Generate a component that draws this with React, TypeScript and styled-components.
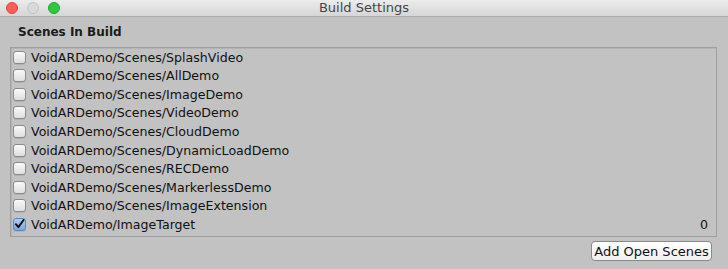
import React from 'react';
import styled, {createGlobalStyle} from 'styled-components';

const scenes: {path: string, checked: boolean, index?: number}[] = [
    {path: 'VoidARDemo/Scenes/SplashVideo', checked: false},
    {path: 'VoidARDemo/Scenes/AllDemo', checked: false},
    {path: 'VoidARDemo/Scenes/ImageDemo', checked: false},
    {path: 'VoidARDemo/Scenes/VideoDemo', checked: false},
    {path: 'VoidARDemo/Scenes/CloudDemo', checked: false},
    {path: 'VoidARDemo/Scenes/DynamicLoadDemo', checked: false},
    {path: 'VoidARDemo/Scenes/RECDemo', checked: false},
    {path: 'VoidARDemo/Scenes/MarkerlessDemo', checked: false},
    {path: 'VoidARDemo/Scenes/ImageExtension', checked: false},
    {path: 'VoidARDemo/ImageTarget', checked: true, index: 0},
];

const GlobalStyle = createGlobalStyle`
    html, body {
        margin: 0;
        padding: 0;
        background: #c2c2c2;
        font-family: "DejaVu Sans", "Liberation Sans", sans-serif;
    }
`;

const App: React.FunctionComponent = () => {
    return (
        <Window>
            <GlobalStyle/>
            <TitleBar>
                <Lights>
                    <Light color="#fc5f57" edge="#de4a42"/>
                    <Light color="#d9d9d9" edge="#c4c4c4"/>
                    <Light color="#2bc840" edge="#1fa92f"/>
                </Lights>
                <Title>Build Settings</Title>
            </TitleBar>
            <Body>
                <Heading>Scenes In Build</Heading>
                <SceneBox>
                    {scenes.map(scene => (
                        <SceneRow key={scene.path}>
                            <CheckBox checked={scene.checked}>
                                {scene.checked && (
                                    <svg width="12" height="12" viewBox="0 0 12 12">
                                        <path d="M2 6.2 L4.8 9.4 L10.4 1.6" fill="none" stroke="#111" strokeWidth="2.1" strokeLinecap="round" strokeLinejoin="round"/>
                                    </svg>
                                )}
                            </CheckBox>
                            <SceneName>{scene.path}</SceneName>
                            {scene.index !== undefined && <SceneIndex>{scene.index}</SceneIndex>}
                        </SceneRow>
                    ))}
                </SceneBox>
                <Footer>
                    <Button>Add Open Scenes</Button>
                </Footer>
            </Body>
        </Window>
    );
}

const Window = styled.div`
    width: 728px;
    height: 269px;
    background: #c2c2c2;
    overflow: hidden;
`;

const TitleBar = styled.div`
    height: 16px;
    display: grid;
    grid-template-columns: 1fr auto 1fr;
    align-items: center;
    background: linear-gradient(#ececec, #d6d6d6);
    border-bottom: 1px solid #adadad;
`;

const Lights = styled.div`
    display: flex;
    gap: 9px;
    padding-left: 6px;
    align-items: center;
`;

const Light = styled.span<{color: string, edge: string}>`
    width: 12px;
    height: 12px;
    border-radius: 50%;
    box-sizing: border-box;
    background: ${p => p.color};
    border: 0.5px solid ${p => p.edge};
`;

const Title = styled.div`
    font-size: 13px;
    color: #454545;
    line-height: 16px;
`;

const Body = styled.div`
    padding: 0 11px 0 10px;
`;

const Heading = styled.div`
    font-weight: bold;
    font-size: 12px;
    color: #1a1a1a;
    padding: 8px 0 0 8px;
    height: 22px;
`;

const SceneBox = styled.div`
    height: 190px;
    box-sizing: border-box;
    border: 1px solid #9f9f9f;
    box-shadow: inset 1px 1px 0 #b4b4b4;
    padding: 0 8px 0 2px;
`;

const SceneRow = styled.div`
    height: 18.55px;
    display: flex;
    align-items: center;
`;

const CheckBox = styled.span<{checked: boolean}>`
    width: 13px;
    height: 13px;
    box-sizing: border-box;
    border-radius: 3px;
    border: 1px solid ${p => p.checked ? '#5e86b8' : '#8a8a8a'};
    background: ${p => p.checked ? 'linear-gradient(#b3cdf0, #80a6dd)' : 'linear-gradient(#fafafa, #dedede)'};
    box-shadow: 0 1px 0 rgba(0, 0, 0, 0.08);
    display: flex;
    align-items: center;
    justify-content: center;
    margin-right: 5px;
`;

const SceneName = styled.span`
    font-size: 12.6px;
    color: #111;
    flex: 1;
`;

const SceneIndex = styled.span`
    font-size: 12.6px;
    color: #111;
`;

const Footer = styled.div`
    display: flex;
    justify-content: flex-end;
    padding: 4px 5px 0 0;
`;

const Button = styled.button`
    height: 20px;
    width: 121px;
    padding: 0;
    font-family: "DejaVu Sans", "Liberation Sans", sans-serif;
    font-size: 13px;
    color: #111;
    background: linear-gradient(#ffffff, #f1f1f1);
    border: 1px solid #8b8b8b;
    border-radius: 4px;
`;

export default App;
